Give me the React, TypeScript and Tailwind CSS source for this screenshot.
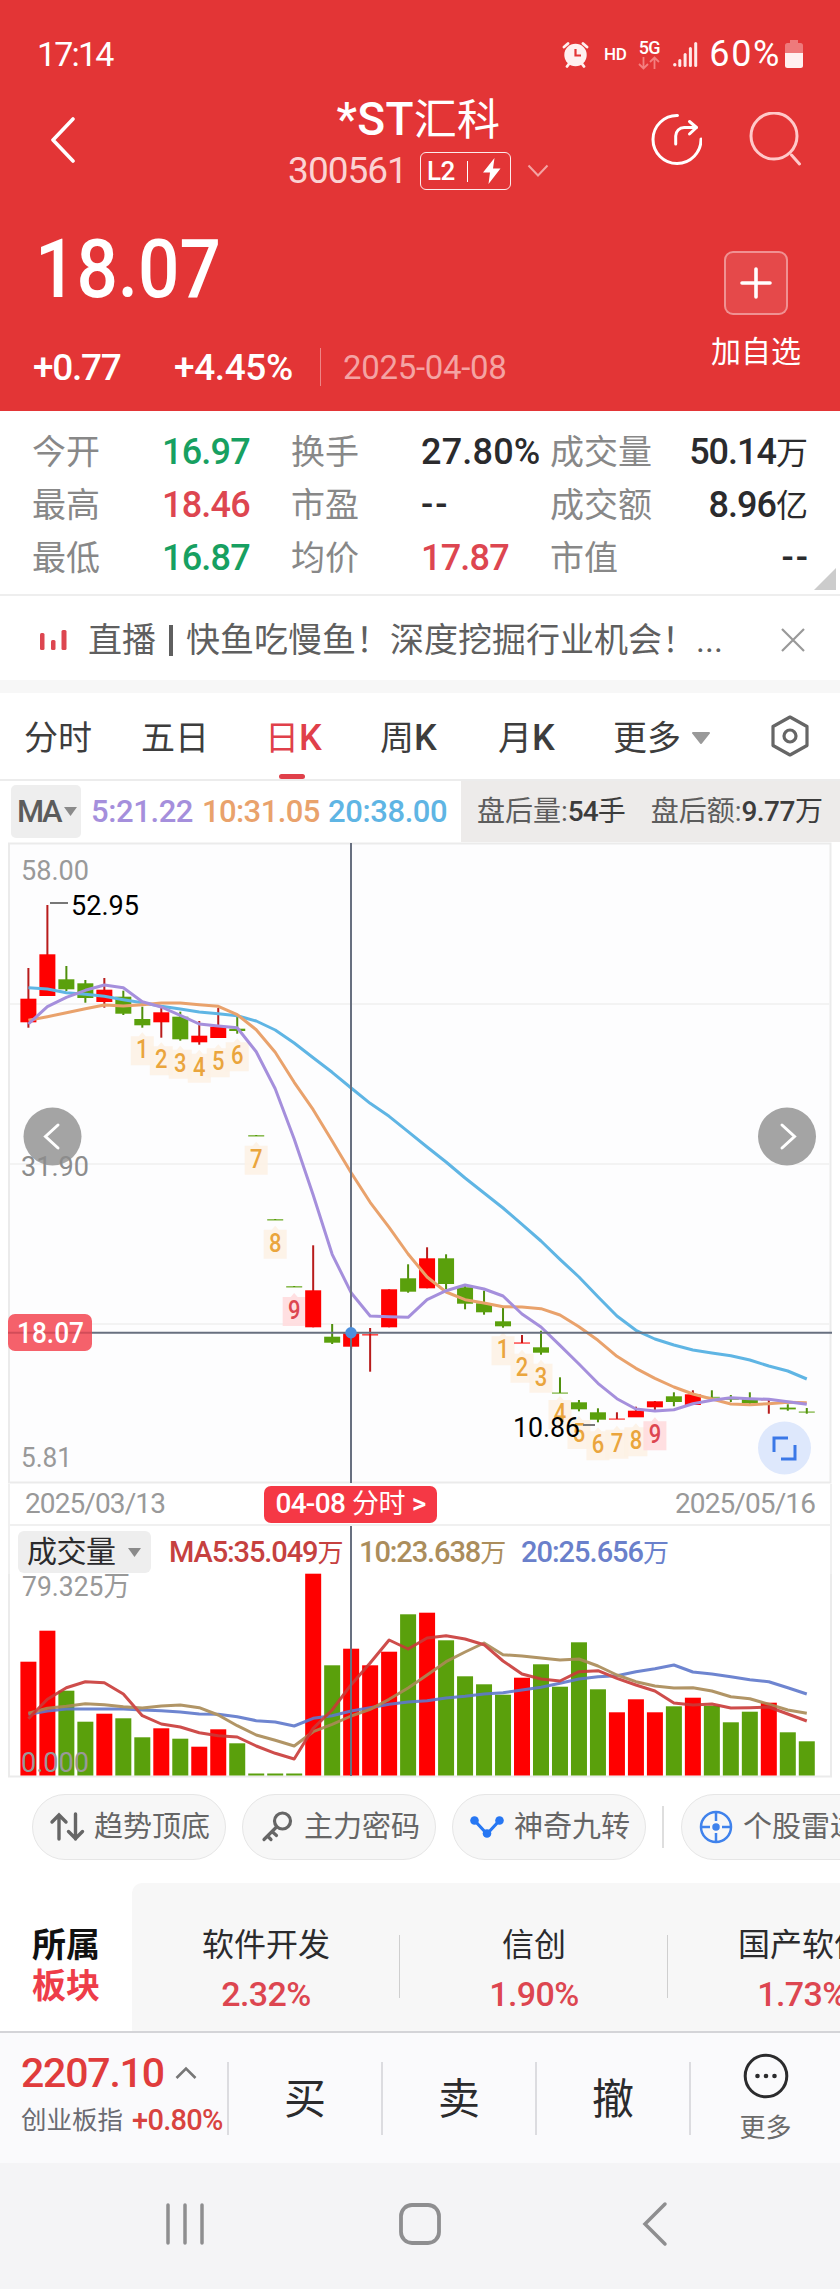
import { ReactNode } from 'react';

// ===== Data =====
const STEP = 18.985;
const xAt = (i: number) => 28.4 + STEP * i;

const RED = '#ff0000';
const GREEN = '#5aa00c';

type Side = 'r' | 'g';

// [side, body top, body bottom, high, low]
const candles: [Side, number, number, number, number][] = [
  ['r', 998.7, 1022.3, 968, 1027.7],
  ['r', 954.3, 996, 905, 996],
  ['g', 979.3, 989.3, 966, 991],
  ['g', 983.3, 998, 980, 1002.7],
  ['r', 989.7, 1002, 978, 1007.7],
  ['g', 996.7, 1013.7, 990.7, 1015],
  ['g', 1019, 1025.3, 1006.7, 1027.7],
  ['r', 1012.3, 1022.3, 1006, 1037.7],
  ['g', 1016.7, 1039.3, 1011.7, 1040.7],
  ['r', 1035.7, 1042.3, 1021, 1044.7],
  ['r', 1026.7, 1038, 1008, 1038],
  ['g', 1028.7, 1031, 1016.7, 1033.7],
  ['g', 1135, 1136.6, 1135, 1136],
  ['g', 1219, 1220.6, 1219, 1220],
  ['g', 1286, 1287.6, 1286, 1287],
  ['r', 1290.3, 1327.3, 1245.3, 1327.3],
  ['g', 1336.7, 1342.7, 1324, 1344],
  ['r', 1333.3, 1346.7, 1330, 1348.7],
  ['r', 1334, 1335.6, 1328, 1371.7],
  ['r', 1289.3, 1327.3, 1289.3, 1327.3],
  ['g', 1278.3, 1291.7, 1264.3, 1292.7],
  ['r', 1258.3, 1288.3, 1247.3, 1288.3],
  ['g', 1258.3, 1284, 1254.3, 1289],
  ['g', 1287.3, 1303.7, 1286, 1309.3],
  ['g', 1303.3, 1312.3, 1290.7, 1314.7],
  ['g', 1321.3, 1326.3, 1307.3, 1327.7],
  ['r', 1342.3, 1343.8, 1335, 1343],
  ['g', 1347.3, 1352.7, 1330.7, 1354.7],
  ['g', 1392.4, 1393.8, 1377.3, 1393],
  ['g', 1402.3, 1409.3, 1400, 1411.3],
  ['g', 1412.3, 1419.7, 1408.3, 1422.3],
  ['r', 1418.4, 1419.8, 1412.3, 1419],
  ['r', 1410.7, 1417.3, 1406.7, 1417],
  ['r', 1401.3, 1407.3, 1401, 1412],
  ['g', 1396.3, 1402, 1392.3, 1406.3],
  ['r', 1394.3, 1405, 1390.3, 1405],
  ['g', 1396.8, 1398.2, 1390.3, 1398],
  ['g', 1398.6, 1400, 1395, 1402],
  ['g', 1399, 1403.3, 1392.3, 1404],
  ['r', 1399, 1400.4, 1399, 1413.7],
  ['g', 1407.6, 1409.4, 1404.3, 1410.7],
  ['g', 1411.4, 1412.8, 1408, 1413.7],
];

const ma5 = [
  1024, 1006.7, 997.3, 990.3, 985, 987.7, 1001.7, 1007, 1015.3, 1024, 1026, 1027.7, 1051.7, 1088.7, 1139, 1195, 1254.3,
  1292.7, 1316, 1316.7, 1317.3, 1299.7, 1290.7, 1285, 1289, 1296, 1314, 1327, 1345.3, 1364, 1383.3, 1398.7, 1409, 1411,
  1409.7, 1403.7, 1400.3, 1397.7, 1398.7, 1399.3, 1401.7, 1404.3,
];
const ma10 = [
  1020.3, 1016.7, 1012.7, 1008.7, 1005, 1006, 1004.7, 1003, 1003, 1004.7, 1006.3, 1014.7, 1029.7, 1052.3, 1082.3,
  1109.7, 1141, 1172.7, 1202.3, 1227.3, 1254, 1277, 1292, 1299.7, 1303, 1306.7, 1307, 1308.7, 1315, 1326.7, 1340.3,
  1356.3, 1368.3, 1378.3, 1387, 1394, 1399, 1404, 1404.7, 1403.7, 1402.3, 1402.7,
];
const ma20 = [
  987.7, 989, 992.7, 994.3, 996.3, 999.7, 1002.7, 1006.3, 1009, 1012, 1013.7, 1015.7, 1021, 1030, 1043, 1057.7, 1072.3,
  1088, 1103.3, 1116.3, 1131.7, 1147, 1162, 1178, 1193, 1208, 1224.3, 1241, 1259.3, 1277, 1296.7, 1316, 1330.3, 1339,
  1345, 1350, 1353, 1355.7, 1360, 1366, 1371, 1379,
];

// [index, digit, baseline]
const counts: [number, number, number][] = [
  [6, 1, 1058.3],
  [7, 2, 1068.3],
  [8, 3, 1071.7],
  [9, 4, 1075.7],
  [10, 5, 1070.3],
  [11, 6, 1064.3],
  [12, 7, 1167.7],
  [13, 8, 1251.7],
  [14, 9, 1319],
  [25, 1, 1358.3],
  [26, 2, 1375.7],
  [27, 3, 1385.7],
  [28, 4, 1422],
  [29, 5, 1442],
  [30, 6, 1453.3],
  [31, 7, 1451.7],
  [32, 8, 1449.3],
  [33, 9, 1443.3],
];

const volumes: [Side, number][] = [
  ['r', 1661.7], ['r', 1630.7], ['g', 1690.7], ['g', 1721.7], ['r', 1713.7], ['g', 1718.3], ['g', 1737.3],
  ['r', 1728.3], ['g', 1738.7], ['r', 1746.7], ['r', 1729.3], ['g', 1743.3], ['g', 1773.5], ['g', 1773.5],
  ['g', 1773.5], ['r', 1573.7], ['g', 1665.3], ['r', 1648.7], ['r', 1665.3], ['r', 1651.7], ['g', 1614.3],
  ['r', 1612.7], ['g', 1640.3], ['g', 1676.3], ['g', 1684.3], ['g', 1694.7], ['r', 1677.7], ['g', 1664.3],
  ['g', 1686.7], ['g', 1642.3], ['g', 1689.3], ['r', 1712.3], ['r', 1699.3], ['r', 1712.3], ['g', 1706.3],
  ['r', 1697.7], ['g', 1705.7], ['g', 1722.3], ['g', 1711.7], ['r', 1702.7], ['g', 1732.3], ['g', 1741.3],
];
const vol5 = [
  1718.7, 1699.3, 1687.7, 1681.7, 1682.7, 1694, 1715.7, 1724, 1727, 1732.7, 1735.7, 1737, 1746, 1753.3, 1759, 1728.3,
  1710, 1684.7, 1663, 1640, 1649, 1638, 1635.7, 1639, 1644.7, 1661, 1674, 1679, 1681, 1671.7, 1670.7, 1678.3, 1685,
  1691, 1703, 1705, 1704, 1708, 1707.7, 1707, 1714, 1721,
];
const vol10 = [
  1713.3, 1708.3, 1706.3, 1703.7, 1704.7, 1706.7, 1708, 1706, 1705, 1707.7, 1715, 1725.7, 1735, 1740.3, 1746, 1731.7,
  1724.3, 1716, 1709.3, 1699.3, 1688, 1675, 1661.7, 1652, 1643, 1654.7, 1656, 1658, 1660, 1659, 1666, 1675, 1681.7,
  1686, 1688, 1687.7, 1691, 1696.7, 1698.7, 1704.3, 1710, 1713.3,
];
const vol20 = [
  1714.3, 1711, 1709, 1709, 1709, 1709, 1710, 1710.7, 1712, 1714, 1714.3, 1716.7, 1720.7, 1722, 1726, 1718.3, 1715.7,
  1711, 1707.7, 1704.3, 1702, 1700.7, 1698, 1696.3, 1694, 1692.7, 1690, 1687.3, 1683.3, 1679, 1676.7, 1675.7, 1671.7,
  1668.7, 1665, 1672, 1674, 1676.7, 1679.7, 1681.7, 1687.7, 1694,
];

// ===== Shared SVG bits =====
function Line({ points, color }: { points: number[]; color: string }) {
  return (
    <polyline
      points={points.map((y, i) => `${xAt(i)},${y}`).join(' ')}
      fill="none"
      stroke={color}
      strokeWidth="3"
      strokeLinejoin="round"
    />
  );
}

interface LabelProps {
  x: number;
  y: number;
  width: number;
  color: string;
  size?: number;
  children: string;
}

function Label({ x, y, width, color, size = 28, children }: LabelProps) {
  return (
    <text x={x} y={y} fill={color} fontSize={size} textLength={width} lengthAdjust="spacingAndGlyphs">
      {children}
    </text>
  );
}

// ===== Header =====
function StatusBar() {
  return (
    <div className="flex h-[92px] items-center pt-4 pr-[37px] pl-[37px]">
      <span className="text-[34px] leading-none tracking-[-1.8px]">17:14</span>
      <svg className="ml-auto" width="27" height="27" viewBox="0 0 27 27" fill="#fff0f0">
        <circle cx="13.5" cy="14" r="11.2" />
        <path d="M2 6 6 2.500M25 6 21 2.500M5 25.500l3-4M22 25.500l-3-4" stroke="#fff0f0" strokeWidth="2.8" strokeLinecap="round" />
        <path d="M13.5 8v6.500h5.500" fill="none" stroke="#e33536" strokeWidth="2.2" />
      </svg>
      <span className="ml-[15px] text-[17px] leading-none font-medium tracking-[-0.4px]">HD</span>
      <div className="ml-[12px] flex w-[22px] flex-col items-center">
        <span className="text-[18px] leading-[17px] font-medium tracking-[-0.7px]">5G</span>
        <svg width="22" height="14" viewBox="0 0 22 14" fill="none" stroke="#f48080" strokeWidth="1.8">
          <path d="M5.5 1v11.5M1 8l4.500 4.500L10 8M16.500 13V1.500M12 6l4.500-4.500L21 6" />
        </svg>
      </div>
      <svg className="ml-[13px]" width="25" height="25" viewBox="0 0 25 25" fill="#ffe9e9">
        <circle cx="1.800" cy="22.800" r="1.700" />
        <rect x="5.300" y="17" width="3" height="8" rx="1.500" />
        <rect x="10.600" y="11" width="3" height="14" rx="1.500" />
        <rect x="15.900" y="5" width="3" height="20" rx="1.500" />
        <rect x="21.200" y="0" width="3" height="25" rx="1.500" />
      </svg>
      <span className="ml-[11px] text-[36px] leading-none tracking-[1.600px]">60%</span>
      <svg className="ml-[4px]" width="18" height="28" viewBox="0 0 18 28">
        <path d="M5 0h8v3h2.500a2.500 2.500 0 0 1 2.500 2.500V14H0V5.500A2.500 2.500 0 0 1 2.500 3H5z" fill="#ee7a7b" />
        <path d="M0 13h18v12.500a2.500 2.500 0 0 1-2.500 2.500h-13A2.500 2.500 0 0 1 0 25.500z" fill="#fff0f0" />
      </svg>
    </div>
  );
}

function TitleBar() {
  return (
    <div className="flex h-[104px] justify-between pr-[37px] pl-[49px]">
      <svg className="mt-[25px]" width="140" height="46" viewBox="0 0 140 46" fill="none">
        <path d="M24 2 4 23l20 21" stroke="#fff" strokeWidth="3.6" strokeLinecap="round" strokeLinejoin="round" />
      </svg>

      <div className="mr-[2px] flex flex-col items-center">
        <div className="text-[46px] leading-[54px] font-medium tracking-[0.3px]">
          *ST<span className="text-[43px] font-normal">汇科</span>
        </div>
        <div className="mt-[5px] flex items-center">
          <span className="text-[37px] leading-[38px] tracking-[-1px] text-[#fbd3d3]">300561</span>
          <span className="ml-[13px] flex h-[38px] w-[91px] items-center rounded-[6px] border-[1.5px] border-white/90 pl-[6px]">
            <span className="text-[26px] leading-none font-medium tracking-[-0.5px]">L2</span>
            <i className="ml-[12px] h-[21px] w-px bg-white" />
            <svg className="ml-[13px]" width="22" height="26" viewBox="0 0 22 26" fill="#fff">
              <path d="M13.500 0 2 14.500h7L7.500 26 19.500 10.500h-7.500z" />
            </svg>
          </span>
          <svg className="ml-[16px]" width="22" height="14" viewBox="0 0 22 14" fill="none">
            <path d="m1.500 1.500 9.500 10 9.500-10" stroke="#f4a3a3" strokeWidth="2" />
          </svg>
        </div>
      </div>

      <div className="mt-[20px] flex gap-[47px]">
        <svg width="52" height="54" viewBox="0 0 52 54" fill="none" stroke="#fff" strokeWidth="3" strokeLinecap="round">
          <path d="M27.500 3.500A24 24 0 1 0 51 27" />
          <path d="M25.700 32v-8a8.500 8.500 0 0 1 8.500-8.500h12" />
          <path d="m39.500 9.500 7 6-7 6.500" strokeLinejoin="round" />
        </svg>
        <svg width="54" height="54" viewBox="0 0 54 54" fill="none" stroke="#ffc9c9" strokeWidth="3" strokeLinecap="round">
          <circle cx="25" cy="24" r="23" />
          <path d="m42.500 43 8 9" />
        </svg>
      </div>
    </div>
  );
}

function PriceHeader() {
  return (
    <header className="h-[411px] bg-[#e33536] text-white">
      <StatusBar />
      <TitleBar />
      <div className="flex h-[215px] justify-between pr-[39px] pl-[33px]">
        <div className="pt-[34px]">
          <div className="ml-[2px] origin-left scale-x-90 text-[81px] leading-[80px] font-medium">18.07</div>
          <div className="mt-[38px] flex h-[38px] items-center">
            <span className="w-[141px] text-[37px] leading-none font-medium tracking-[-1.3px]">+0.77</span>
            <span className="w-[146px] text-[37px] leading-none font-medium tracking-[-0.4px]">+4.45%</span>
            <i className="h-[38px] w-px bg-white/40" />
            <span className="ml-[22px] text-[33px] leading-none tracking-[-0.3px] text-[#f4a3a3]">2025-04-08</span>
          </div>
        </div>
        <div className="flex flex-col items-center pt-[55px]">
          <div className="flex h-[64px] w-[64px] items-center justify-center rounded-[9px] border-2 border-white/40 bg-white/10">
            <svg width="32" height="32" viewBox="0 0 32 32" stroke="#fff" strokeWidth="3.600" strokeLinecap="round">
              <path d="M16 2v28M2 16h28" />
            </svg>
          </div>
          <div className="mt-[17px] text-[30px] leading-[40px]">加自选</div>
        </div>
      </div>
    </header>
  );
}

// ===== Quote table =====
const quotes = [
  ['今开', '16.97', 'text-[#17a061]', '换手', '27.80%', 'text-[#2b2b2d]', '成交量', '50.14万'],
  ['最高', '18.46', 'text-[#dd4650]', '市盈', '--', 'text-[#2b2b2d]', '成交额', '8.96亿'],
  ['最低', '16.87', 'text-[#17a061]', '均价', '17.87', 'text-[#dd4650]', '市值', '--'],
];

function QuoteTable() {
  return (
    <section className="relative h-[185px] border-b-2 border-[#eeeeee] pt-[14px] pr-[32px] pl-[32px]">
      {quotes.map((q) => (
        <div key={q[0]} className="flex h-[53px] items-center text-[34px] leading-none whitespace-nowrap text-[#888]">
          <span className="w-[130px]">{q[0]}</span>
          <span className={`w-[129px] text-[36px] font-medium tracking-[-0.8px] ${q[2]}`}>{q[1]}</span>
          <span className="w-[130px]">{q[3]}</span>
          <span
            className={`w-[129px] text-[36px] font-medium ${q[4] === '--' ? 'tracking-[2px]' : q[4] === '27.80%' ? 'tracking-[0.2px]' : 'tracking-[-0.8px]'} ${q[5]}`}
          >
            {q[4]}
          </span>
          <span>{q[6]}</span>
          <span className="ml-auto text-[#2b2b2d]">
            <span className={`text-[36px] font-medium ${q[7] === '--' ? '-mr-[2px] tracking-[2px]' : 'tracking-[-1px]'}`}>
              {q[7].replace(/[万亿]/, '')}
            </span>
            <span className="text-[32px]">{q[7].replace(/[^万亿]/g, '')}</span>
          </span>
        </div>
      ))}
      <svg className="absolute right-[4px] bottom-[4px]" width="22" height="22" viewBox="0 0 22 22">
        <path d="M22 0v22H0z" fill="#cccccc" />
      </svg>
    </section>
  );
}

function LiveRow() {
  return (
    <section className="flex h-[84px] items-center pt-[4px] pr-[34px] pl-[40px]">
      <svg width="27" height="21" viewBox="0 0 27 21" fill="#dd4650">
        <rect x="0" y="3" width="4.500" height="17" rx="1.500" />
        <rect x="11" y="10" width="4.500" height="10" rx="1.500" />
        <rect x="21.500" y="0" width="5" height="20" rx="1.500" />
      </svg>
      <div className="ml-[21px] flex items-center text-[34px] leading-none whitespace-nowrap text-[#5f5f5f]">
        直播
        <i className="ml-[13px] mr-[13px] h-[31px] w-[4px] bg-[#5f5f5f]" />
        快鱼吃慢鱼！深度挖掘行业机会！...
      </div>
      <svg className="ml-auto" width="26" height="26" viewBox="0 0 26 26" stroke="#999" strokeWidth="2.200">
        <path d="m2 2 22 22M24 2 2 24" />
      </svg>
    </section>
  );
}

// ===== Period tabs =====
function Tab({ active, width, children }: { active?: boolean; width: string; children: ReactNode }) {
  return (
    <div className={`relative flex h-full shrink-0 items-center pt-[3px] ${width} ${active ? 'text-[#e0404a]' : ''}`}>
      {children}
      {active && <i className="absolute bottom-0 left-[14px] h-[5px] w-[26px] rounded-full bg-[#e0404a]" />}
    </div>
  );
}

function PeriodTabs() {
  return (
    <nav className="flex h-[88px] items-center border-b-2 border-[#ececec] pl-[24px] text-[34px] leading-none text-[#3d3d3d]">
      <Tab width="w-[117px]">分时</Tab>
      <Tab width="w-[124px]">五日</Tab>
      <Tab width="w-[115px]" active>日<span className="text-[36px] font-medium">K</span></Tab>
      <Tab width="w-[118px]">周<span className="text-[36px] font-medium">K</span></Tab>
      <Tab width="w-[115px]">月<span className="text-[36px] font-medium">K</span></Tab>
      <Tab width="w-[158px]">
        更多
        <svg className="ml-[11px]" width="18" height="12" viewBox="0 0 18 12">
          <path d="M1 0h16a1 1 0 0 1 .8 1.600l-7.500 9.500a1.600 1.600 0 0 1-2.600 0L.2 1.600A1 1 0 0 1 1 0z" fill="#999" />
        </svg>
      </Tab>
      <svg width="38" height="42" viewBox="0 0 38 42" fill="none" stroke="#666" strokeWidth="3.200" strokeLinejoin="round">
        <path d="M19 2 36 11.500v19L19 40 2 30.500v-19z" />
        <circle cx="19" cy="21" r="6" />
      </svg>
    </nav>
  );
}

function MaRow() {
  return (
    <div className="flex h-[61px] text-[31px] leading-none font-medium">
      <div className="mt-[4px] ml-[11px] flex h-[53px] w-[70px] shrink-0 items-center rounded-[5px] bg-[#eeeeee] pl-[6px] text-[#5c5c5c]">
        <span className="tracking-[-2.500px]">MA</span>
        <svg className="ml-[4px]" width="13" height="9" viewBox="0 0 13 9">
          <path d="M0 0h13L6.500 9z" fill="#8a8a8a" />
        </svg>
      </div>
      <div className="flex w-[380px] items-center whitespace-nowrap tracking-[-0.4px]">
        <span className="ml-[10px] w-[111px] text-[#a58fdc]">5:21.22</span>
        <span className="w-[126px] tracking-[-0.6px] text-[#e9a26c]">10:31.05</span>
        <span className="tracking-[-0.4px] text-[#5fb5e4]">20:38.00</span>
      </div>
      <div className="flex flex-1 items-center bg-[#edebea] pl-[16px] text-[28px] whitespace-nowrap text-[#3c3c3c]">
        <span className="font-normal text-[#5c5c5c]">盘后量:</span>
        <span className="tracking-[-1px]">54</span>
        <span className="w-[53px] font-normal">手</span>
        <span className="font-normal text-[#5c5c5c]">盘后额:</span>
        <span className="tracking-[-0.5px]">9.77</span>
        <span className="font-normal">万</span>
      </div>
    </div>
  );
}

// ===== K line chart =====
function CountBadge({ index, digit, y }: { index: number; digit: number; y: number }) {
  const x = xAt(index);
  const hot = digit === 9;
  return (
    <g>
      <path
        d={`M${x - 11.5} ${y - 22}h8l3.500-4 3.500 4h8v29h-23z`}
        fill={hot ? '#ffd9dc' : '#fdf1e4'}
        fillOpacity="0.85"
      />
      <text
        x={x}
        y={y}
        textAnchor="middle"
        fontSize="26"
        fontWeight="500"
        fill={hot ? '#dd4650' : '#eaa53d'}
        textLength="12.5"
        lengthAdjust="spacingAndGlyphs"
      >
        {digit}
      </text>
    </g>
  );
}

function KLineChart() {
  return (
    <svg className="block" width="840" height="642" viewBox="0 842 840 642">
      <rect x="9" y="843.5" width="821.5" height="639" fill="#fdfdfe" stroke="#ebebeb" strokeWidth="2" />
      {[1004, 1164, 1324].map((y) => (
        <path key={y} d={`M10 ${y}H830`} stroke="#f3f3f3" strokeWidth="2" />
      ))}

      {counts.map(([i, d, y]) => (
        <CountBadge key={i} index={i} digit={d} y={y} />
      ))}

      {candles.map(([side, top, bottom, high, low], i) => {
        const thin = bottom - top < 1.7;
        return (
          <g key={i} fill={side === 'r' ? RED : GREEN}>
            <rect x={xAt(i) - 1} y={high} width="2" height={low - high} fill={side === 'r' ? '#b81c1c' : '#4f8f0c'} />
            <rect x={xAt(i) - 8} y={top} width="16" height={bottom - top} opacity={thin ? 0.7 : 1} />
          </g>
        );
      })}

      <Line points={ma20} color="#5fb5e4" />
      <Line points={ma10} color="#e9a26c" />
      <Line points={ma5} color="#a58fdc" />

      {/* high / low marks */}
      <path d="M50 903h18M583 1425h12" stroke="#777" strokeWidth="2" />
      <Label x={71} y={914.5} width={68} color="#000">52.95</Label>
      <Label x={513} y={1436.5} width={67} color="#000">10.86</Label>

      {/* pager buttons */}
      <g fill="none" stroke="#fff" strokeWidth="3" strokeLinecap="round">
        <circle cx="52.500" cy="1136.500" r="29" fill="#a4a4a4" stroke="none" />
        <path d="m58 1125-12.500 11.500L58 1148" />
        <circle cx="787" cy="1136.500" r="29" fill="#a4a4a4" stroke="none" />
        <path d="m782 1125 12.500 11.500L782 1148" />
      </g>

      <Label x={21} y={880} width={68} color="#999">58.00</Label>
      <Label x={21} y={1176} width={68} color="#8c8c8c">31.90</Label>
      <Label x={21} y={1466.500} width={51} color="#999">5.81</Label>

      {/* crosshair */}
      <path d="M351 843V1483M9 1332.700H832" stroke="#687080" strokeWidth="2" />
      <circle cx="351" cy="1332.700" r="5.700" fill="#4c8fdc" />
      <rect x="8" y="1314" width="84" height="37" rx="7" fill="#f5616b" />
      <path d="M8 1332.700h84" stroke="#d24c58" strokeWidth="2" />
      <g fontWeight="500">
        <Label x={17} y={1342.7} width={67} color="#fff" size={29}>18.07</Label>
      </g>

      {/* expand button */}
      <circle cx="784.500" cy="1448" r="26.500" fill="#dee8fc" />
      <path d="M788 1438h-14v14M781 1459h14v-14" fill="none" stroke="#3b78e7" strokeWidth="3" />
    </svg>
  );
}

function DateRow() {
  return (
    <div className="mr-[8px] ml-[8px] flex h-[42px] items-center border-x-2 border-b-2 border-[#f0f0f0] pr-[15px] pl-[15px] text-[28px] leading-none text-[#999]">
      <span className="w-[239px] tracking-[-0.9px]">2025/03/13</span>
      <span className="flex h-[37px] w-[173px] items-center justify-center rounded-[7px] bg-[#f53845] text-[28px] font-medium tracking-[-0.7px] text-white whitespace-nowrap">
        04-08 <span className="mr-[7px] ml-[7px] text-[27px] font-normal">分时</span> &gt;
      </span>
      <span className="ml-auto tracking-[-0.9px]">2025/05/16</span>
    </div>
  );
}

// ===== Volume =====
function VolumeChart() {
  return (
    <section className="relative h-[252px]">
      <i className="absolute top-0 left-[8px] h-[48px] w-[2px] bg-[#f0f0f0]" />
      <i className="absolute top-0 right-[8px] h-[48px] w-[2px] bg-[#f0f0f0]" />
      <div className="flex h-[46px] items-center pt-[6px] pl-[18px] text-[29px] leading-none font-medium whitespace-nowrap">
        <div className="flex h-[42px] w-[133px] shrink-0 items-center rounded-[6px] bg-[#eeeeee] pl-[9px] text-[30px] font-normal tracking-[-0.5px] text-[#2b2b2d]">
          成交量
          <svg className="ml-[12px]" width="13" height="9" viewBox="0 0 13 9">
            <path d="M0 0h13L6.500 9z" fill="#8a8a8a" />
          </svg>
        </div>
        <span className="ml-[18px] w-[190px] tracking-[-1.1px] text-[#c6413f]">
          MA5:35.049<span className="text-[26px] font-normal">万</span>
        </span>
        <span className="w-[162px] tracking-[-1.1px] text-[#ab8d5c]">
          10:23.638<span className="text-[26px] font-normal">万</span>
        </span>
        <span className="tracking-[-1px] text-[#6a80cb]">
          20:25.656<span className="text-[26px] font-normal">万</span>
        </span>
      </div>
      <svg className="block overflow-visible" width="840" height="206" viewBox="0 1572 840 206">
        <path d="M9 1572V1776.500H831V1572" fill="none" stroke="#ebebeb" strokeWidth="2" />
        {volumes.map(([side, top], i) => (
          <rect key={i} x={xAt(i) - 8} y={top} width="16" height={1775.5 - top} fill={side === 'r' ? RED : GREEN} />
        ))}
        <g opacity="0.9">
          <Line points={vol20} color="#5f78cc" />
          <Line points={vol10} color="#a98a56" />
          <Line points={vol5} color="#c93a38" />
        </g>
        <Label x={22} y={1596} width={108} color="#999">79.325万</Label>
        <Label x={21} y={1771.5} width={68} color="#999">0.000</Label>
      </svg>
      <i className="absolute top-0 bottom-[2px] left-[350px] w-[2px] bg-[#687080]" />
    </section>
  );
}

// ===== Feature chips =====
function Chip({ icon, label }: { icon: ReactNode; label: string }) {
  return (
    <div className="flex h-[66px] w-[194px] shrink-0 items-center rounded-full border-[1.5px] border-[#e6e6e6] bg-[#f7f7f7] pl-[16px] text-[29px] leading-none whitespace-nowrap text-[#666]">
      <span className="mr-[9px] flex w-[36px] shrink-0 justify-center">{icon}</span>
      {label}
    </div>
  );
}

function ChipRow() {
  return (
    <div className="flex h-[105px] items-start gap-[16px] overflow-hidden pt-[16px] pl-[32px]">
      <Chip
        label="趋势顶底"
        icon={
          <svg width="36" height="30" viewBox="0 0 36 30" fill="none" stroke="#666" strokeWidth="3.400" strokeLinecap="round">
            <path d="M10 27V3M3 10l7-7 7 7M26.500 2v25M19.500 19.500l7 7 7-7" />
          </svg>
        }
      />
      <Chip
        label="主力密码"
        icon={
          <svg width="32" height="32" viewBox="0 0 32 32" fill="none" stroke="#666" strokeWidth="3.200" strokeLinecap="round">
            <circle cx="21.500" cy="10" r="8" />
            <path d="M15.500 16 3 28.500M6.500 25l3.500 3.500M11 20.500l4.500 4" />
          </svg>
        }
      />
      <Chip
        label="神奇九转"
        icon={
          <svg width="36" height="24" viewBox="0 0 36 24" fill="#2777f3">
            <path d="m6 6 12 13L30 6" fill="none" stroke="#2777f3" strokeWidth="3.200" />
            <circle cx="5.500" cy="5.500" r="4.300" />
            <circle cx="18" cy="18.500" r="4.300" />
            <circle cx="30.500" cy="5.500" r="4.300" />
          </svg>
        }
      />
      <i className="mt-[12px] h-[42px] w-[2px] shrink-0 bg-[#dedede]" />
      <div className="ml-[1px]">
        <Chip
          label="个股雷达"
          icon={
            <svg width="34" height="34" viewBox="0 0 34 34" fill="none" stroke="#3f82ec" strokeWidth="2.500">
              <circle cx="17" cy="17" r="15" />
              <path d="M17 2v9M17 23v9M2 17h9M23 17h9" />
              <circle cx="17" cy="17" r="2.500" fill="#3f82ec" />
            </svg>
          }
        />
      </div>
    </div>
  );
}

// ===== Sectors =====
const sectors = [
  { name: '软件开发', change: '2.32%' },
  { name: '信创', change: '1.90%' },
  { name: '国产软件', change: '1.73%' },
];

function Sectors() {
  return (
    <section className="flex h-[148px] overflow-hidden">
      <div className="w-[132px] shrink-0 pt-[42px] pl-[32px] text-[34px] leading-[41px] font-bold text-[#111]">
        <div>所属</div>
        <div className="text-[#ee3d49]">板块</div>
      </div>
      <div className="flex flex-1 overflow-hidden rounded-tl-[10px] bg-[#f7f7f7]">
        {sectors.map((s, i) => (
          <div key={s.name} className="relative flex w-[268px] shrink-0 flex-col items-center pt-[42px]">
            <span className="text-[32px] leading-[40px] whitespace-nowrap text-[#2b2b2d]">{s.name}</span>
            <span className="mt-[9px] text-[34px] leading-[40px] font-medium tracking-[-0.6px] text-[#dd4650]">{s.change}</span>
            {i < 2 && <i className="absolute top-[52px] right-0 h-[63px] w-px bg-[#cfcfcf]" />}
          </div>
        ))}
      </div>
    </section>
  );
}

// ===== Bottom bars =====
function TradeBar() {
  return (
    <div className="flex h-[132px] border-t-2 border-[#d4d4d8] bg-[#fafafc]">
      <div className="w-[227px] shrink-0 pt-[20px] pl-[21px]">
        <div className="flex items-center">
          <span className="text-[41px] leading-[40px] font-medium tracking-[-1.200px] text-[#e03c3c]">2207.10</span>
          <svg className="ml-[11px]" width="22" height="14" viewBox="0 0 22 14" fill="none">
            <path d="m1.500 12 9.500-9.500L20.500 12" stroke="#777" strokeWidth="2.600" />
          </svg>
        </div>
        <div className="mt-[9px] flex items-center text-[25.500px] leading-[36px] whitespace-nowrap text-[#6b6b72]">
          创业板指
          <span className="ml-[9px] text-[29px] font-medium tracking-[-0.7px] text-[#d8433f]">+0.80%</span>
        </div>
      </div>
      {['买', '卖', '撤'].map((t) => (
        <div key={t} className="flex w-[154px] shrink-0 items-center">
          <i className="h-[73px] w-[2px] bg-[#dcdce0]" />
          <span className="flex-1 pt-[3px] text-center text-[42px] leading-none text-[#2b2b2d]">{t}</span>
        </div>
      ))}
      <div className="flex flex-1 items-center">
        <i className="h-[73px] w-[2px] bg-[#dcdce0]" />
        <div className="flex h-full flex-1 flex-col items-center pt-[20px]">
          <svg width="46" height="46" viewBox="0 0 46 46" fill="#2b2b2d">
            <circle cx="23" cy="23" r="20.800" fill="none" stroke="#2b2b2d" strokeWidth="3" />
            <circle cx="14.500" cy="23" r="2.300" />
            <circle cx="23" cy="23" r="2.300" />
            <circle cx="31.500" cy="23" r="2.300" />
          </svg>
          <span className="mt-[11px] text-[26px] leading-[36px] text-[#6b6b6b]">更多</span>
        </div>
      </div>
    </div>
  );
}

function SystemNav() {
  return (
    <div className="flex flex-1 items-start justify-between bg-[#f4f4f6] pt-[38px] pr-[171px] pl-[164px]">
      <svg width="42" height="46" viewBox="0 0 42 46" stroke="#8e8e90" strokeWidth="3.500" strokeLinecap="round">
        <path d="M4 4v38M21 4v38M38 4v38" />
      </svg>
      <svg className="mr-[8px]" width="46" height="46" viewBox="0 0 46 46" fill="none" stroke="#8e8e90" strokeWidth="3.800">
        <rect x="4" y="4" width="38" height="38" rx="11" />
      </svg>
      <svg width="28" height="46" viewBox="0 0 28 46" fill="none" stroke="#8e8e90" strokeWidth="3.500" strokeLinecap="round">
        <path d="M24 3 4 23l20 20" />
      </svg>
    </div>
  );
}

export default function App() {
  return (
    <div className="flex h-[2289px] w-[840px] flex-col overflow-hidden bg-white font-['Roboto','Noto_Sans_CJK_SC',sans-serif]">
      <PriceHeader />
      <QuoteTable />
      <LiveRow />
      <div className="h-[13px] bg-[#f7f7f7]" />
      <PeriodTabs />
      <MaRow />
      <KLineChart />
      <DateRow />
      <VolumeChart />
      <ChipRow />
      <Sectors />
      <TradeBar />
      <SystemNav />
    </div>
  );
}
